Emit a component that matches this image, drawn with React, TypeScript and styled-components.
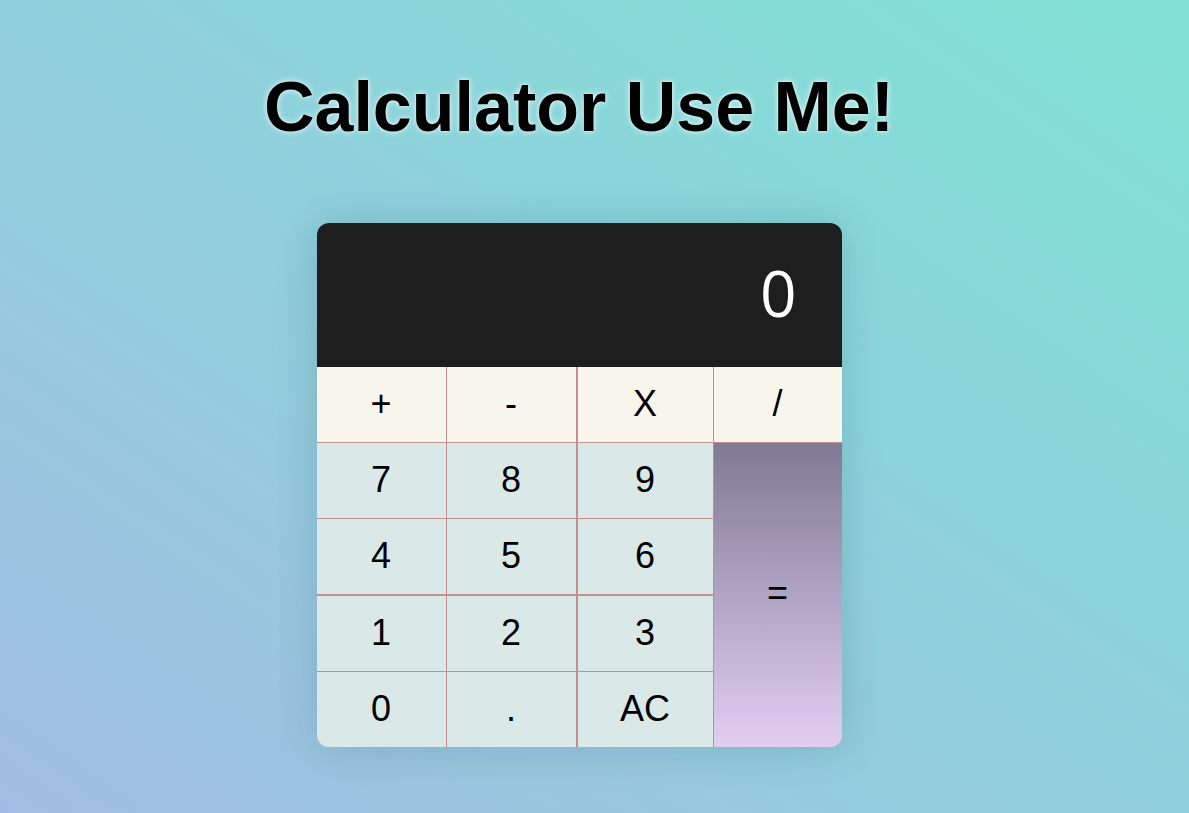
import React from "react";
import styled, { createGlobalStyle } from "styled-components";

const GlobalStyle = createGlobalStyle`
  html, body { margin: 0; padding: 0; }
  body { font-family: "Liberation Sans", Arial, sans-serif; }
  * { box-sizing: border-box; }
`;

const Page = styled.div`
  min-height: 100vh;
  background: linear-gradient(to top right, #a1bde3 0%, #7fe2d5 100%);
  display: flex;
  flex-direction: column;
  align-items: center;
  padding: 67px 31px 0 0;
`;

const Title = styled.h1`
  margin: 0 0 75px;
  font-family: "Liberation Sans", Arial, sans-serif;
  font-weight: 700;
  font-size: 70px;
  line-height: 1.15;
  color: #000;
  text-shadow: 0 0 6px rgba(235, 250, 250, 0.95), 0 0 2px rgba(235, 250, 250, 0.9);
`;

const Card = styled.div`
  display: grid;
  grid-template-columns: 130px 131px 136px 128px;
  grid-template-rows: 144px 76px 76px 77px 76px 75px;
  border-radius: 12px;
  overflow: hidden;
  box-shadow: 0 0 40px rgba(0, 60, 80, 0.18);
`;

const Display = styled.div`
  grid-column: 1 / span 4;
  background: #1e1e1e;
  color: #fff;
  display: flex;
  align-items: center;
  justify-content: flex-end;
  padding: 0 45px 4px 0;
  font-family: "Open Sans", "Noto Sans", sans-serif;
  font-size: 64px;
`;

const Key = styled.button<{ $op?: boolean; $r?: number; $b?: number }>`
  border: none;
  border-right: ${(p) => p.$r ?? 0}px solid #c48f8f;
  border-bottom: ${(p) => p.$b ?? 0}px solid #c48f8f;
  background: ${(p) => (p.$op ? "#f8f6ec" : "#dbe8e8")};
  color: #000;
  font-family: "Liberation Sans", Arial, sans-serif;
  font-size: 36px;
  padding: 0;
  display: flex;
  align-items: center;
  justify-content: center;
  cursor: pointer;
`;

const Equals = styled.button`
  grid-column: 4;
  grid-row: 3 / span 4;
  border: none;
  background: linear-gradient(to bottom, #7f7a95 0%, #e3cdf2 100%);
  color: #000;
  font-family: "Liberation Sans", Arial, sans-serif;
  font-size: 36px;
  padding: 0 0 4px;
  display: flex;
  align-items: center;
  justify-content: center;
  cursor: pointer;
`;

type K = { label: string; r: number; b: number; op?: boolean };

const ops: K[] = [
  { label: "+", r: 1, b: 1, op: true },
  { label: "-", r: 2, b: 1, op: true },
  { label: "X", r: 1, b: 1, op: true },
  { label: "/", r: 0, b: 1, op: true },
];

const rows: K[][] = [
  [
    { label: "7", r: 1, b: 1 },
    { label: "8", r: 2, b: 1 },
    { label: "9", r: 1, b: 1 },
  ],
  [
    { label: "4", r: 1, b: 2 },
    { label: "5", r: 2, b: 2 },
    { label: "6", r: 1, b: 2 },
  ],
  [
    { label: "1", r: 1, b: 1 },
    { label: "2", r: 2, b: 1 },
    { label: "3", r: 1, b: 1 },
  ],
  [
    { label: "0", r: 1, b: 0 },
    { label: ".", r: 2, b: 0 },
    { label: "AC", r: 1, b: 0 },
  ],
];

export default function App() {
  return (
    <>
      <GlobalStyle />
      <Page>
        <Title>Calculator Use Me!</Title>
        <Card>
          <Display>0</Display>
          {ops.map((k) => (
            <Key key={k.label} $op $r={k.r} $b={k.b}>
              {k.label}
            </Key>
          ))}
          {rows.map((row, i) => (
            <React.Fragment key={i}>
              {row.map((k) => (
                <Key key={k.label} $r={k.r} $b={k.b} style={{ gridRow: i + 3 }}>
                  {k.label}
                </Key>
              ))}
            </React.Fragment>
          ))}
          <Equals>=</Equals>
        </Card>
      </Page>
    </>
  );
}
